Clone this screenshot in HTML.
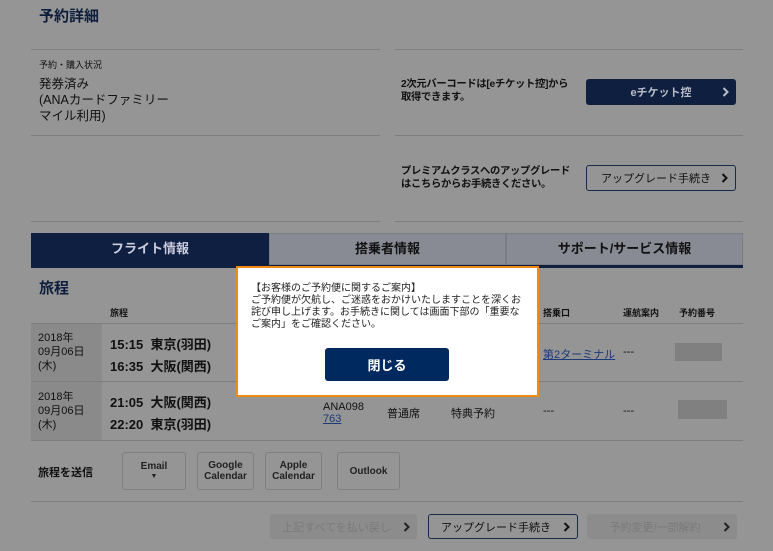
<!DOCTYPE html>
<html><head><meta charset="utf-8"><style>
*{margin:0;padding:0;box-sizing:border-box}
body{width:773px;height:551px;background:#959595;font-family:"Liberation Sans","Noto Sans CJK JP",sans-serif;color:#111;position:relative;overflow:hidden;font-size:12px}
.a{position:absolute}
.hl{position:absolute;height:1px;background:#7e7e7e}
.btn{position:absolute;border-radius:3px;font-weight:bold;font-size:12px;display:flex;align-items:center;justify-content:center}
.chev{position:absolute;right:7px;top:50%;margin-top:-5px;width:7px;height:10px}
.sb{position:absolute;top:452px;height:38px;border:1px solid #7f7f7f;border-radius:3px;font-size:10px;font-weight:bold;color:#222;text-align:center;line-height:11px;display:flex;flex-direction:column;align-items:center;justify-content:center}
</style></head><body>
<div class="a" style="left:39px;top:5px;font-size:15px;font-weight:bold;color:#0d1d3c">予約詳細</div>
<div class="hl" style="left:31px;top:49px;width:349px"></div>
<div class="hl" style="left:395px;top:49px;width:348px"></div>
<div class="a" style="left:39px;top:58px;font-size:9px">予約・購入状況</div>
<div class="a" style="left:39px;top:76px;font-size:12.5px;line-height:16px">発券済み<br>(ANAカードファミリー<br>マイル利用)</div>
<div class="hl" style="left:31px;top:135px;width:349px"></div>
<div class="hl" style="left:395px;top:135px;width:348px"></div>
<div class="hl" style="left:31px;top:221px;width:349px"></div>
<div class="hl" style="left:395px;top:221px;width:348px"></div>
<div class="a" style="left:401px;top:78px;font-size:10.3px;font-weight:bold;line-height:13px;letter-spacing:-0.3px">2次元バーコードは[eチケット控]から<br>取得できます。</div>
<div class="btn" style="left:586px;top:79px;width:150px;height:26px;background:#0f1f40;color:#b8bcc8;font-size:11px">eチケット控<svg class="chev" viewBox="0 0 7 10"><path d="M1.5 1l4 4-4 4" fill="none" stroke="#b8bcc8" stroke-width="2"/></svg></div>
<div class="a" style="left:401px;top:165px;font-size:10.3px;font-weight:bold;line-height:13px;letter-spacing:-0.3px">プレミアムクラスへのアップグレード<br>はこちらからお手続きください。</div>
<div class="btn" style="left:586px;top:165px;width:150px;height:26px;border:1px solid #162a4a;color:#111;padding-right:10px;font-size:11px;font-weight:normal">アップグレード手続き<svg class="chev" viewBox="0 0 7 10"><path d="M1.5 1l4 4-4 4" fill="none" stroke="#111" stroke-width="2"/></svg></div>
<div class="a" style="left:31px;top:233px;width:238px;height:34px;background:#0e1f42;color:#ccd;font-size:13px;font-weight:bold;text-align:center;line-height:31px">フライト情報</div>
<div class="a" style="left:269px;top:233px;width:237px;height:32px;background:#888b93;border:1px solid #7a7d85;font-size:13px;font-weight:bold;text-align:center;line-height:30px;color:#111">搭乗者情報</div>
<div class="a" style="left:506px;top:233px;width:237px;height:32px;background:#888b93;border:1px solid #7a7d85;font-size:13px;font-weight:bold;text-align:center;line-height:30px;color:#111">サポート/サービス情報</div>
<div class="a" style="left:31px;top:265px;width:712px;height:3px;background:#0e1f42"></div>
<div class="a" style="left:39px;top:277px;font-size:15px;font-weight:bold;color:#0d1d3c">旅程</div>
<div class="a" style="left:110px;top:306px;font-size:9px;font-weight:bold">旅程</div>
<div class="a" style="left:543px;top:306px;font-size:9px;font-weight:bold">搭乗口</div>
<div class="a" style="left:623px;top:306px;font-size:9px;font-weight:bold">運航案内</div>
<div class="a" style="left:679px;top:306px;font-size:9px;font-weight:bold">予約番号</div>
<div class="hl" style="left:31px;top:323px;width:712px"></div>
<div class="a" style="left:31px;top:324px;width:71px;height:57px;background:#8a8a8a"></div>
<div class="a" style="left:38px;top:331px;font-size:11px;line-height:14px">2018年<br>09月06日<br>(木)</div>
<div class="a" style="left:110px;top:334px;font-size:13px;font-weight:bold;line-height:22px">15:15&nbsp; 東京(羽田)<br>16:35&nbsp; 大阪(関西)</div>
<div class="a" style="left:543px;top:346px;font-size:11px;color:#1c3a78;text-decoration:underline">第2ターミナル</div>
<div class="a" style="left:623px;top:346px;font-size:11px">---</div>
<div class="a" style="left:675px;top:343px;width:47px;height:18px;background:#808080"></div>
<div class="hl" style="left:31px;top:381px;width:712px"></div>
<div class="a" style="left:31px;top:382px;width:71px;height:58px;background:#8a8a8a"></div>
<div class="a" style="left:38px;top:390px;font-size:11px;line-height:14px">2018年<br>09月06日<br>(木)</div>
<div class="a" style="left:110px;top:392px;font-size:13px;font-weight:bold;line-height:22px">21:05&nbsp; 大阪(関西)<br>22:20&nbsp; 東京(羽田)</div>
<div class="a" style="left:323px;top:401px;font-size:11px;line-height:12px">ANA098<br><span style="color:#1c3a78;text-decoration:underline">763</span></div>
<div class="a" style="left:387px;top:405px;font-size:11px">普通席</div>
<div class="a" style="left:451px;top:405px;font-size:11px">特典予約</div>
<div class="a" style="left:543px;top:405px;font-size:11px">---</div>
<div class="a" style="left:623px;top:405px;font-size:11px">---</div>
<div class="a" style="left:678px;top:400px;width:49px;height:19px;background:#808080"></div>
<div class="hl" style="left:31px;top:440px;width:712px"></div>
<div class="a" style="left:38px;top:464px;font-size:11px;font-weight:bold">旅程を送信</div>
<div class="sb" style="left:122px;width:64px">Email<span style="font-size:7px;line-height:9px">▼</span></div>
<div class="sb" style="left:197px;width:57px">Google<br>Calendar</div>
<div class="sb" style="left:265px;width:57px">Apple<br>Calendar</div>
<div class="sb" style="left:337px;width:63px">Outlook</div>
<div class="hl" style="left:31px;top:501px;width:712px"></div>
<div class="btn" style="left:270px;top:514px;width:147px;height:25px;background:#8c8c8c;color:#7a7a7a;font-size:11px;font-weight:normal;padding-right:14px">上記すべてを払い戻し<svg class="chev" viewBox="0 0 7 10"><path d="M1.5 1l4 4-4 4" fill="none" stroke="#222" stroke-width="2"/></svg></div>
<div class="btn" style="left:428px;top:514px;width:150px;height:25px;border:1px solid #162a4a;color:#111;font-size:11px;font-weight:normal;padding-right:14px">アップグレード手続き<svg class="chev" viewBox="0 0 7 10"><path d="M1.5 1l4 4-4 4" fill="none" stroke="#111" stroke-width="2"/></svg></div>
<div class="btn" style="left:587px;top:514px;width:150px;height:25px;background:#8c8c8c;color:#7a7a7a;font-size:11px;font-weight:normal;padding-right:14px">予約変更/一部解約<svg class="chev" viewBox="0 0 7 10"><path d="M1.5 1l4 4-4 4" fill="none" stroke="#222" stroke-width="2"/></svg></div>
<div class="a" style="left:236px;top:266px;width:303px;height:131px;background:#fff;border:2px solid #f08a14"></div>
<div class="a" style="left:251px;top:283px;width:275px;font-size:10px;line-height:12px;color:#222">【お客様のご予約便に関するご案内】<br>ご予約便が欠航し、ご迷惑をおかけいたしますことを深くお詫び申し上げます。お手続きに関しては画面下部の「重要なご案内」をご確認ください。</div>
<div class="btn" style="left:325px;top:348px;width:124px;height:33px;background:#002a5f;color:#fff;font-size:13px">閉じる</div>
</body></html>
